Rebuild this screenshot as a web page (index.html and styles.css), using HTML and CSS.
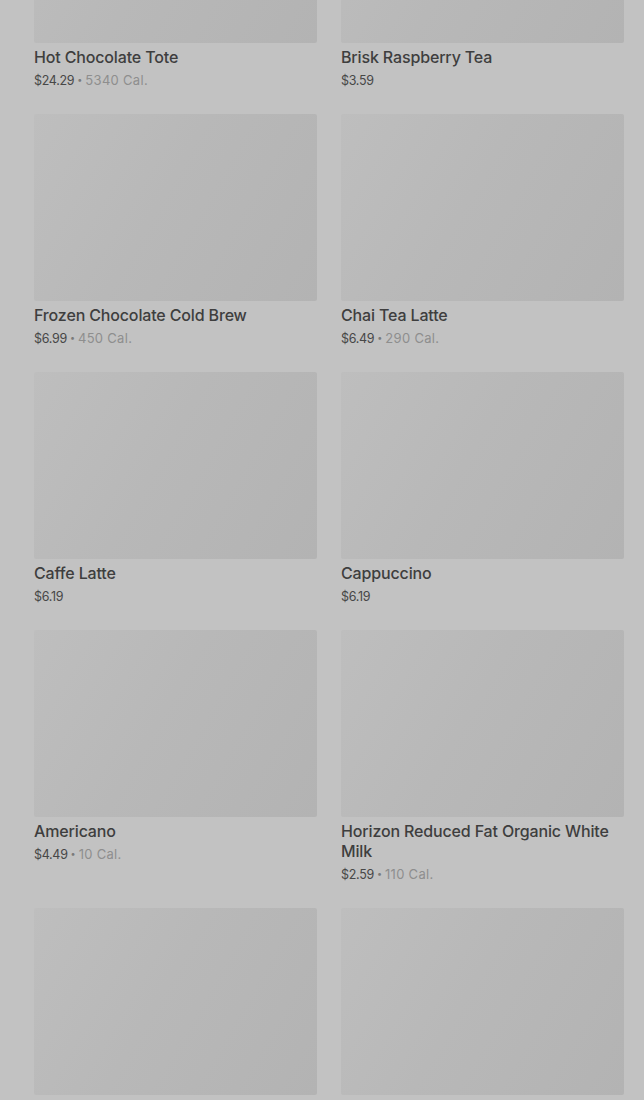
FILE: index.html
```html
<!DOCTYPE html>
<html lang="en">
<head>
<meta charset="utf-8">
<title>Menu</title>
<link rel="stylesheet" href="styles.css">
</head>
<body>
<main class="grid">
  <article class="item"><div class="thumb"></div><h3 class="name">Hot Chocolate Tote</h3><p class="meta"><span class="price">$24.29</span><span class="dot">•</span><span class="cal">5340 Cal.</span></p></article>
  <article class="item"><div class="thumb"></div><h3 class="name">Brisk Raspberry Tea</h3><p class="meta"><span class="price">$3.59</span></p></article>
  <article class="item"><div class="thumb"></div><h3 class="name">Frozen Chocolate Cold Brew</h3><p class="meta"><span class="price">$6.99</span><span class="dot">•</span><span class="cal">450 Cal.</span></p></article>
  <article class="item"><div class="thumb"></div><h3 class="name">Chai Tea Latte</h3><p class="meta"><span class="price">$6.49</span><span class="dot">•</span><span class="cal">290 Cal.</span></p></article>
  <article class="item"><div class="thumb"></div><h3 class="name">Caffe Latte</h3><p class="meta"><span class="price">$6.19</span></p></article>
  <article class="item"><div class="thumb"></div><h3 class="name">Cappuccino</h3><p class="meta"><span class="price">$6.19</span></p></article>
  <article class="item"><div class="thumb"></div><h3 class="name">Americano</h3><p class="meta"><span class="price">$4.49</span><span class="dot">•</span><span class="cal">10 Cal.</span></p></article>
  <article class="item"><div class="thumb"></div><h3 class="name">Horizon Reduced Fat Organic White Milk</h3><p class="meta"><span class="price">$2.59</span><span class="dot">•</span><span class="cal">110 Cal.</span></p></article>
  <article class="item"><div class="thumb"></div><h3 class="name">Caramel Macchiato</h3><p class="meta"><span class="price">$6.69</span></p></article>
  <article class="item"><div class="thumb"></div><h3 class="name">Caramel Frappuccino</h3><p class="meta"><span class="price">$6.99</span></p></article>
</main>
</body>
</html>
```
FILE: styles.css
```css
html, body {
  margin: 0;
  padding: 0;
  background: #c2c2c2;
  overflow: hidden;
}
body {
  font-family: Inter, "Noto Sans", sans-serif;
  height: 1100px;
}
.grid {
  display: grid;
  grid-template-columns: 283px 283px;
  column-gap: 24px;
  row-gap: 23px;
  padding: 0 20px 0 34px;
  margin-top: -144px;
  align-items: start;
}
.item {
  margin: 0;
}
.thumb {
  height: 187px;
  border-radius: 2px;
  background: linear-gradient(120deg, #bebebe 0%, #b8b8b8 45%, #b3b3b3 100%);
}
.name {
  margin: 4px 0 0;
  font-size: 16px;
  line-height: 20px;
  font-weight: 500;
  letter-spacing: -0.15px;
  color: #3e3e3e;
}
.meta {
  margin: 4px 0 0;
  height: 20px;
  font-size: 12.5px;
  line-height: 20px;
}
.meta span {
  line-height: 1;
}
.price {
  color: #474747;
  letter-spacing: -0.3px;
}
.dot {
  color: #7a7a7a;
  font-size: 9px;
  margin: 0 3px;
  vertical-align: 2px;
}
.cal {
  color: #8e8e8e;
  font-size: 13px;
  letter-spacing: 0.3px;
}
```
